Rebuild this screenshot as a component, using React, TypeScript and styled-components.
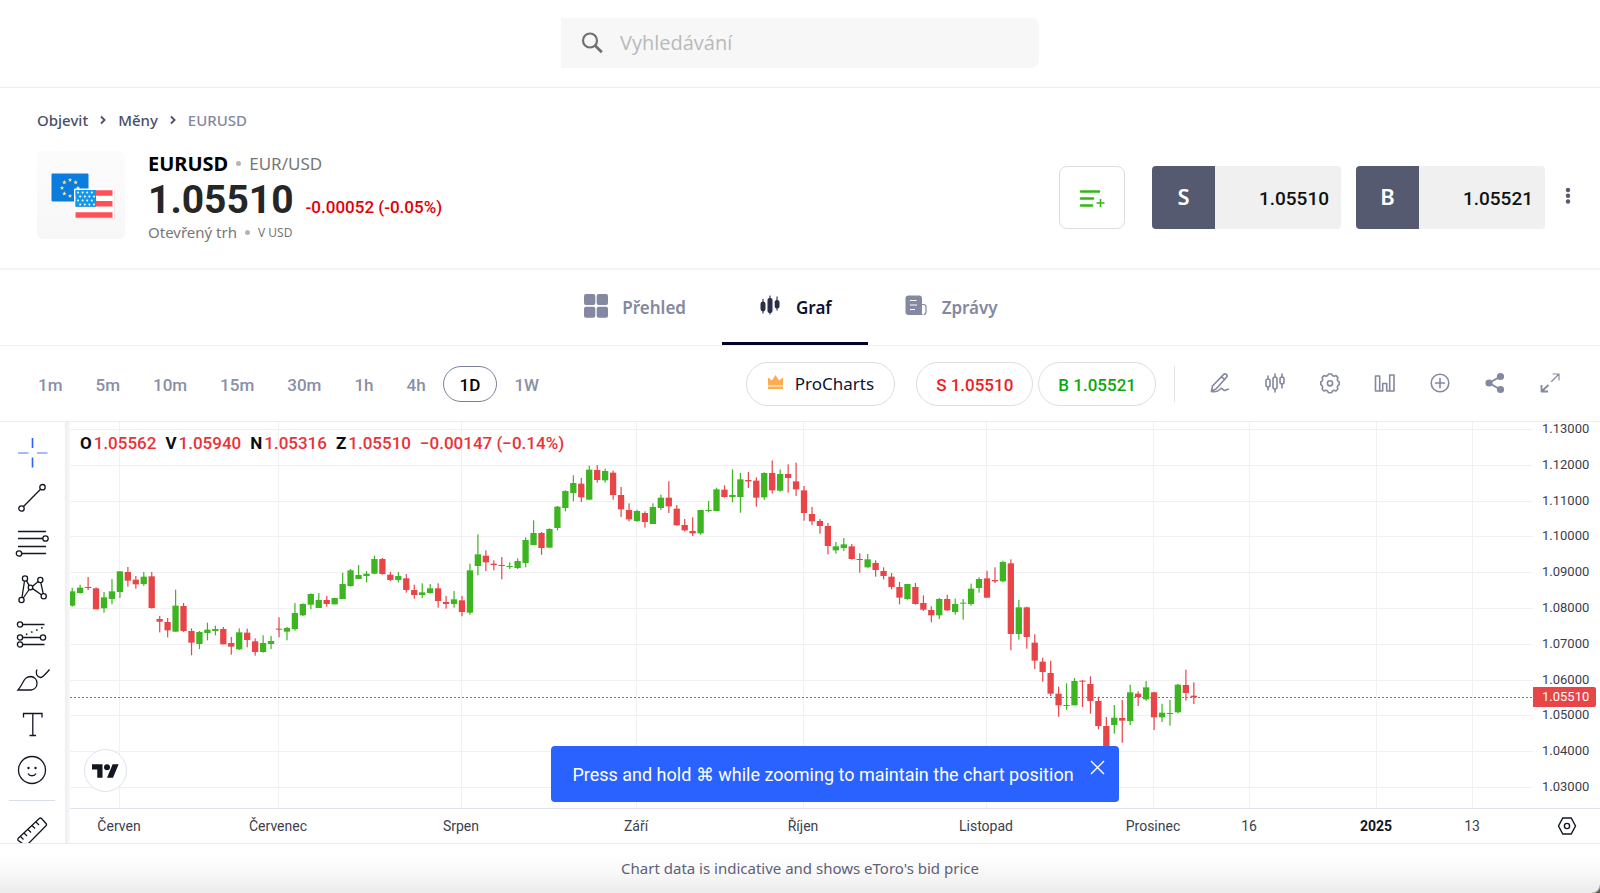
import React from 'react';
import styled, { createGlobalStyle } from 'styled-components';

const textFont = '"Noto Sans", "Open Sans", sans-serif';
const numberFont = 'Roboto, "Liberation Sans", sans-serif';
const ink = '#131722';
const muted = '#8488a0';
const slate = '#555a70';
const red = '#e84549';
const green = '#3cb521';

const GlobalStyle = createGlobalStyle`
  * { box-sizing: border-box; }
  body { margin: 0; background: #fff; font-family: ${textFont}; }
  button { font: inherit; color: inherit; background: none; border: 0; padding: 0; cursor: pointer; }
  svg { display: block; flex: none; }
`;

const Page = styled.div`
  min-height: 100vh;
  display: flex;
  flex-direction: column;
`;

const TopBar = styled.header`
  display: flex;
  justify-content: center;
  padding: 18px 24px 19px;
  border-bottom: 1px solid #ececec;
`;

const SearchBox = styled.label`
  display: flex;
  align-items: center;
  gap: 15px;
  flex: 0 1 478px;
  height: 50px;
  padding: 0 20px;
  background: #f7f7f7;
  border-radius: 0 8px 8px 0;
`;

const SearchInput = styled.input`
  flex: 1;
  min-width: 0;
  border: 0;
  outline: 0;
  background: transparent;
  font: 400 20px/28px "Open Sans", sans-serif;
  color: #333;
  &::placeholder { color: #b9b9b9; opacity: 1; }
`;

const Instrument = styled.section`
  padding: 22px 24px 27px 37px;
  border-bottom: 2px solid #f5f5f6;
`;

const Breadcrumb = styled.nav`
  display: flex;
  align-items: center;
  gap: 12px;
  margin-bottom: 21px;
  font-size: 15px;
  line-height: 20px;
  font-weight: 500;
`;

const Crumb = styled.a<{ $current?: boolean }>`
  color: ${p => (p.$current ? muted : '#4b5069')};
  text-decoration: none;
`;

const InstrumentRow = styled.div`
  display: flex;
  align-items: flex-start;
`;

const LogoTile = styled.div`
  width: 88px;
  height: 88px;
  border-radius: 6px;
  background: linear-gradient(#fcfcfc, #f7f7f7);
`;

const Quote = styled.div`
  flex: 1;
  margin-left: 23px;
`;

const QuoteLine = styled.div<{ $height: number; $baseline?: boolean }>`
  display: flex;
  align-items: ${p => (p.$baseline ? 'baseline' : 'center')};
  gap: ${p => (p.$baseline ? 12 : 8)}px;
  height: ${p => p.$height}px;
  line-height: ${p => p.$height}px;
`;

const Symbol = styled.h1`
  margin: 0;
  font-size: 20px;
  font-weight: 700;
  color: #000;
`;

const Subtle = styled.span<{ $size: number }>`
  font-size: ${p => p.$size}px;
  color: #777;
`;

const Dot = styled.span`
  width: 5px;
  height: 5px;
  border-radius: 50%;
  background: #b5b5b8;
`;

const Price = styled.span`
  font: 700 39px/48px ${numberFont};
  color: #262626;
`;

const Change = styled.span`
  font: 500 17px/24px ${numberFont};
  color: #e20008;
`;

const Actions = styled.div`
  display: flex;
  align-items: center;
  padding-top: 15px;
`;

const WatchButton = styled.button`
  display: flex;
  align-items: center;
  justify-content: center;
  width: 66px;
  height: 63px;
  margin-right: 27px;
  border: 1px solid #dedede;
  border-radius: 8px;
`;

const TradeButton = styled.button`
  display: flex;
  width: 189px;
  height: 63px;
  margin-right: 15px;
  border-radius: 4px;
  overflow: hidden;
  background: #f0f0f0;
`;

const TradeSide = styled.span`
  width: 63px;
  height: 63px;
  background: ${slate};
  color: #fff;
  font: 600 22px/60px ${textFont};
`;

const TradePrice = styled.span`
  flex: 1;
  padding-right: 12px;
  text-align: right;
  color: #111;
  font: 500 19px/66px ${numberFont};
`;

const MoreButton = styled.button`
  width: 16px;
  height: 40px;
  padding-bottom: 2px;
  display: flex;
  justify-content: center;
  align-items: center;
`;

const Tabs = styled.nav`
  display: flex;
  justify-content: center;
  height: 76px;
  padding-right: 18px;
  border-bottom: 1px solid #f0f0f2;
`;

const Tab = styled.a<{ $active?: boolean }>`
  display: flex;
  align-items: center;
  gap: 14px;
  padding: 3px 36px 0;
  border-bottom: 3px solid ${p => (p.$active ? '#000529' : 'transparent')};
  color: ${p => (p.$active ? '#0d1132' : muted)};
  text-decoration: none;
  font-size: 17px;
  line-height: 24px;
  font-weight: 600;
`;

const TabIcon = styled.span`
  width: 24px;
  padding-bottom: 4px;
`;

const Toolbar = styled.div`
  display: flex;
  align-items: center;
  height: 76px;
  padding: 0 38px 0 22px;
  border-bottom: 1px solid #ececee;
`;

const Intervals = styled.div`
  display: flex;
  align-items: center;
  gap: 1px;
  flex: 1;
`;

const IntervalButton = styled.button<{ $active?: boolean }>`
  height: 36px;
  padding: 2px 16px 0;
  border: ${p => (p.$active ? '1px solid #7b7f98' : '0')};
  border-radius: 18px;
  color: ${p => (p.$active ? '#000' : '#8a8fa6')};
  font: 500 17px/20px ${numberFont};
`;

const Pill = styled.button<{ $tone?: string; $gap: number }>`
  display: flex;
  align-items: center;
  gap: 11px;
  height: 44px;
  padding: ${p => (p.$tone ? '2px 19px 0' : '0 20px')};
  margin-right: ${p => p.$gap}px;
  border: 1px solid #dedee0;
  border-radius: 22px;
  color: ${p => p.$tone || '#0d1132'};
  font: ${p => (p.$tone ? `500 17px/24px ${numberFont}` : `400 17px/24px ${textFont}`)};
`;

const Crown = styled.svg`
  margin-bottom: 3px;
`;

const ToolIcons = styled.div`
  display: flex;
  align-items: center;
  gap: 31px;
  height: 36px;
  padding: 0 0 2px 33px;
  border-left: 1px solid #e4e4e8;
  color: ${muted};
`;

const IconButton = styled.button`
  width: 24px;
  height: 24px;
`;

const Workspace = styled.main`
  display: flex;
  height: 421px;
  overflow: hidden;
`;

const DrawBar = styled.aside`
  flex: none;
  width: 70px;
  padding: 8px 7px 0 0;
  display: flex;
  flex-direction: column;
  align-items: center;
  color: ${ink};
  background: linear-gradient(90deg, #fff 65px, #eeeef0 65px, #f9f9fa 70px);
`;

const DrawTools = styled.div`
  flex: none;
  display: flex;
  flex-direction: column;
  height: 363px;
`;

const DrawButton = styled.button`
  flex: 1;
  display: flex;
  align-items: center;
`;

const DrawDivider = styled.hr`
  flex: none;
  width: 46px;
  height: 1px;
  margin: 7px 0 14px;
  border: 0;
  background: #d9dfe8;
`;

const ChartArea = styled.section`
  position: relative;
  flex: 1;
  min-width: 0;
  display: flex;
`;

const Plot = styled.svg`
  flex: 1;
  min-width: 0;
  height: 421px;
`;

const AxisText = styled.text<{ $bold?: boolean }>`
  font: ${p => (p.$bold ? 700 : 400)} 14px ${numberFont};
  fill: ${p => (p.$bold ? '#131722' : '#3c404c')};
  text-anchor: middle;
`;

const Legend = styled.div`
  position: absolute;
  top: 11px;
  left: 10px;
  display: flex;
  gap: 9px;
  color: #ea3238;
  font: 500 17px/20px ${numberFont};
`;

const LegendKey = styled.span`
  margin-right: 2px;
  font-weight: 700;
  color: #0c0c14;
`;

const Badge = styled.a`
  position: absolute;
  left: 14px;
  bottom: 51px;
  width: 43px;
  height: 43px;
  display: flex;
  align-items: center;
  justify-content: center;
  background: #fff;
  border: 1px solid #dfe1ec;
  border-radius: 50%;
`;

const PriceAxis = styled.div`
  position: relative;
  flex: none;
  width: 67px;
  display: flex;
  flex-direction: column;
`;

const PriceLabels = styled.div`
  flex: none;
  display: flex;
  flex-direction: column;
  justify-content: space-between;
  height: 372px;
  padding-left: 9px;
  color: #3c404c;
  font: 400 13px/14px ${numberFont};
`;

const LastPrice = styled.div`
  position: absolute;
  top: 265px;
  left: 0;
  width: 63px;
  padding-left: 9px;
  border-radius: 0 2px 2px 0;
  background: ${red};
  color: #fff;
  font: 400 13px/20px ${numberFont};
`;

const AxisCorner = styled.div`
  flex: 1;
  margin-top: 14px;
  display: flex;
  align-items: center;
  justify-content: center;
  border-top: 1px solid #e0e3eb;
`;

const ToastLayer = styled.div`
  position: absolute;
  left: 0;
  right: 0;
  bottom: 41px;
  display: flex;
  justify-content: center;
  pointer-events: none;
`;

const Toast = styled.div`
  display: flex;
  gap: 16px;
  height: 56px;
  padding: 0 14px 0 21px;
  border-radius: 4px;
  background: #2962ff;
  color: #fff;
  font: 400 18px/58px ${numberFont};
  pointer-events: auto;
`;

const ToastClose = styled.button`
  height: 42px;
  display: flex;
  align-items: center;
`;

const Footer = styled.footer`
  position: relative;
  flex: 1;
  min-height: 50px;
  border-top: 1px solid #ececee;
  background: linear-gradient(#fff 20%, #f8f8f8 60%, #ebebeb);
  text-align: center;
  color: #5c6178;
  font-size: 15px;
  line-height: 48px;
`;

const WindowCorner = styled.span`
  position: absolute;
  right: 0;
  bottom: 0;
  width: 8px;
  height: 8px;
  background: radial-gradient(circle at 0 0, transparent 7px, #5c6048 9px);
`;

type Candle = [up: 0 | 1, high: number, top: number, bottom: number, low: number];

// Pixel offsets from the top of the plot, in thirds, grouped by the offset they start from.
const groups: { base: number; rows: Candle[] }[] = [
  {
    base: 108,
    rows: [
      [1,173,184,227,230],[1,164,173,189,191],[0,141,171,173,180],[0,172,175,238,238],[1,186,202,235,248],
      [1,147,184,207,223],[1,124,124,186,204],[0,111,126,152,170],[0,138,149,163,176],[1,126,140,162,168],
      [0,126,139,234,236],[0,258,267,275,307],[0,264,276,301,322],[1,179,227,305,305],[0,219,228,303,306],
      [0,295,303,338,376],[1,303,306,342,357],[1,278,299,309,331],[1,287,297,303,316],[0,291,297,343,343],
      [0,321,339,350,374],[1,295,307,358,360],[0,296,308,330,352],[0,325,334,366,377],[1,316,339,366,368],
      [1,318,333,342,357],[0,262,296,299,322],[1,291,294,305,331],[1,219,249,297,302],[1,220,222,256,258],
      [1,190,192,224,238],[1,189,210,234,234],[0,198,210,222,230],[1,203,204,223,223],[1,128,162,207,207],
      [1,117,121,168,170],[1,105,135,147,147],[1,123,131,138,157],[1,77,87,131,133],[0,84,87,132,134],
      [0,126,134,150,153],[1,126,138,150,157],[0,132,145,180,188],[0,164,180,195,206],[1,160,187,195,204],
      [1,162,175,189,191],[0,160,175,213,233],[0,198,216,222,236],[1,183,208,222,233],[0,198,211,246,259],
      [1,101,121,248,254],[1,13,73,108,136],[0,61,77,97,123],[0,91,101,105,121],
    ],
  },
  {
    base: 28,
    rows: [
      [0,321,345,348,388],[1,337,348,351,357],[1,325,333,354,357],[1,262,270,339,352],[1,211,249,285,285],
      [0,246,249,294,314],[1,235,237,293,293],[1,168,170,234,241],[1,121,123,174,184],[1,76,99,129,154],
      [0,84,101,142,156],[1,47,59,149,149],[0,45,60,90,98],[1,56,63,91,98],[0,62,68,135,149],
      [0,111,135,178,201],[0,160,180,208,214],[1,179,183,213,216],[0,184,189,216,233],[1,160,171,222,222],
      [1,134,143,174,180],[0,94,143,169,189],[0,165,176,226,227],[0,207,225,241,245],[0,202,243,250,258],
      [1,180,180,250,254],[1,153,180,183,187],[1,113,118,183,183],[0,106,119,141,143],[1,58,135,141,157],
      [1,69,88,141,188],[0,66,90,94,114],[0,82,92,143,170],[1,67,69,142,149],[0,31,69,121,131],
      [1,58,72,122,125],[0,43,72,84,128],[0,38,94,118,138],[0,108,121,189,212],[0,171,192,214,225],
      [0,207,213,228,251],[0,219,228,288,313],[1,276,289,301,311],[1,264,283,294,303],[0,282,289,327,329],
      [0,310,327,329,368],[1,312,328,352,353],[0,331,339,360,380],[0,352,363,378,388],[0,369,380,411,418],
      [0,396,411,443,463],[1,402,402,447,449],[0,399,411,462,464],[0,436,459,479,483],[0,469,480,496,517],
      [1,444,447,496,507],[0,434,447,481,483],[1,446,462,486,494],[1,447,458,461,509],[1,401,416,462,467],
      [1,382,387,414,428],[0,362,385,443,443],[0,352,390,394,399],[1,332,336,394,397],
    ],
  },
  {
    base: 118,
    rows: [
      [0,58,70,282,331],[1,180,202,282,299],[0,200,202,291,326],[0,283,308,362,387],[0,353,365,396,425],
      [0,362,399,461,468],[0,440,461,496,530],[1,430,495,498,509],[1,414,423,496,496],[0,420,422,425,501],
      [0,409,432,483,521],[0,470,483,558,568],[0,531,558,625,625],[1,495,533,555,581],[0,480,534,542,608],
      [1,434,457,543,555],[0,454,461,471,498],[1,423,442,478,482],[0,455,457,532,570],[1,491,518,532,546],
      [1,480,519,522,557],[1,432,434,517,520],[0,389,435,459,482],[0,427,467,472,492],
    ],
  },
];

const candles = groups.flatMap(g =>
  g.rows.map(([up, ...ys]) => ({ up, ys: ys.map(y => g.base + y / 3) })),
);

const priceTicks = ['1.13000', '1.12000', '1.11000', '1.10000', '1.09000', '1.08000', '1.07000', '1.06000', '1.05000', '1.04000', '1.03000'];

const timeTicks: [number, string, boolean?][] = [
  [49, 'Červen'], [208, 'Červenec'], [391, 'Srpen'], [566, 'Září'], [733, 'Říjen'], [916, 'Listopad'],
  [1083, 'Prosinec'], [1179, '16'], [1306, '2025', true], [1402, '13'],
];

const intervals = ['1m', '5m', '10m', '15m', '30m', '1h', '4h', '1D', '1W'];

const legend = [['O', '1.05562'], ['V', '1.05940'], ['N', '1.05316'], ['Z', '1.05510']];

const star = (x: number, y: number, r: number) =>
  Array.from({ length: 10 }, (_, i) => {
    const a = (Math.PI * i) / 5 - Math.PI / 2;
    const d = i % 2 ? r * 0.45 : r;
    return `${(x + d * Math.cos(a)).toFixed(2)},${(y + d * Math.sin(a)).toFixed(2)}`;
  }).join(' ');

const Flags = () => (
  <svg width="88" height="88" viewBox="0 0 88 88" aria-hidden="true">
    <rect x="14.5" y="22.500" width="37" height="28" rx="1" fill="#0b7bdc" />
    {Array.from({ length: 8 }, (_, i) => (
      <polygon
        key={i}
        fill="#fbe38e"
        points={star(33 + 8 * Math.sin((i * Math.PI) / 4), 37 - 8 * Math.cos((i * Math.PI) / 4), 2.3)}
      />
    ))}
    <rect x="37.500" y="38.500" width="40.500" height="30" rx="1.5" fill="#000" opacity=".07" />
    <rect x="37" y="37.500" width="40" height="30" rx="1" fill="#fff" />
    <path d="M38.500 42h37M38.500 52.800h37M38.500 64h37" stroke="#ff5058" strokeWidth="5.500" />
    <rect x="38.500" y="39" width="20.500" height="16.800" fill="#1199ee" />
    {[41, 45, 49, 53].map((y, r) =>
      [0, 1, 2, 3].map(c => (
        <circle key={`${r}${c}`} cx={41 + c * 4.6 + (r % 2) * 2.2} cy={y + 0.5} r="1" fill="#fff" />
      )),
    )}
  </svg>
);

const line = { fill: 'none', stroke: 'currentColor', strokeWidth: 1.6, strokeLinecap: 'round', strokeLinejoin: 'round' } as const;

const toolIcons: [string, React.ReactNode][] = [
  ['Draw', <g {...line} key="d"><path d="M3.500 20l1-5L15.500 3.600a2 2 0 0 1 3 2.700L8 18z" /><path d="M13.500 5.800l3 2.600M3.500 20.500c4 .8 7-.5 9-2.500s2.600 1.800 4 1.500 1.500-1.300 4-1.300" /></g>],
  ['Chart type', <g {...line} key="c"><path d="M5 5v3M5 16v3M12 3v3M12 18v3M19 3v3M19 13v4" /><rect x="3" y="8" width="4" height="8" rx="2" /><rect x="10" y="6" width="4" height="12" rx="2" /><rect x="17" y="6" width="4" height="7" rx="2" /></g>],
  ['Settings', <g {...line} key="s"><path d="M9.600 4.600L10.400 3h3.200l.8 1.600 1.700.7 1.900-.7 1.900 2-.6 1.900.7 1.700 1.200.8v2.600l-1.200.8-.7 1.700.6 1.900-1.900 2-1.900-.7-1.700.7-.8 1.700h-3.200l-.8-1.700-1.700-.7-1.900.7-1.900-2 .6-1.900-.7-1.700-1.200-.8V11l1.200-.8.7-1.700-.6-1.900 1.900-2 1.900.7z" /><circle cx="12" cy="12.300" r="2.600" /></g>],
  ['Indicators', <path key="i" {...line} d="M2.500 20V5h4.200v15M6.700 20h3v-7.500h4V20h3V4H21v16M2.500 20h4.200M16.700 20H21" />],
  ['Compare', <g {...line} key="p"><circle cx="12" cy="12" r="8.800" /><path d="M12 7.500v9M7.500 12h9" /></g>],
  ['Share', <g key="h" fill="currentColor"><circle cx="17.500" cy="5.500" r="3.600" /><circle cx="6" cy="12" r="3.600" /><circle cx="17.500" cy="18.500" r="3.600" /><path d="M17.500 5.500L6 12l11.500 6.500" fill="none" stroke="currentColor" strokeWidth="2" /></g>],
  ['Full screen', <g {...line} key="f"><path d="M13.500 10.500L21 3M15 3H21v6" strokeWidth="1.100" /><path d="M10.500 14L3.500 20.500M3.500 14v6.500h6.500" strokeWidth="1.800" strokeLinecap="butt" /></g>],
];

const thin = { fill: 'none', stroke: 'currentColor', strokeWidth: 1.3 } as const;

const drawTools: [string, React.ReactNode][] = [
  ['Crosshair', <g key="x" fill="none"><path d="M18.500 3v10M18.500 22.500v10" stroke="#2962ff" strokeWidth="1.600" /><path d="M4 18h10.500M23 18h10.500" stroke="#8aa2fb" strokeWidth="1.600" /></g>],
  ['Trend line', <g key="l" {...thin}><circle cx="28.500" cy="7.200" r="2.700" /><circle cx="7.500" cy="28.500" r="2.700" /><path d="M9.500 26.500L26.500 9.200" /></g>],
  ['Fibonacci', <g key="f" {...thin}><path d="M4 6.500h28M4 13.500h25M4 21.500h28M8 28.500h24" /><circle cx="31.500" cy="13.500" r="2.700" /><circle cx="5" cy="28.500" r="2.700" /></g>],
  ['Patterns', <g key="p" {...thin}><circle cx="11" cy="7.500" r="2.600" /><circle cx="26.300" cy="9" r="2.600" /><circle cx="7.500" cy="29" r="2.600" /><circle cx="29.700" cy="25.200" r="2.600" /><circle cx="16.500" cy="16.500" r="2.300" /><path d="M10.500 10L8 26.400M12.500 9.600l2.600 5M18.500 15.300l5.800-4.800M26.800 11.600l2.400 11M18.600 17.600l8.800 6.200M15.200 18.500L9.200 27" /></g>],
  ['Projection', <g key="r" {...thin}><circle cx="6" cy="8.500" r="2.600" /><circle cx="6" cy="21.500" r="2.600" /><circle cx="29" cy="21.500" r="2.600" /><circle cx="6" cy="28.500" r="2.600" /><path d="M8.600 8.500H30.500M8.600 21.500h17.800M8.600 28.500H30.500" /><path d="M12 18.500L30 11" strokeDasharray="1.500 4" strokeWidth="1.600" /></g>],
  ['Brush', <g key="b" {...thin}><path d="M4 28h13c8-1 8-12.500 0-13.500-8 0-7 7-13 13.500z" /><path d="M23 7.500c-2 4 0 7.500 3.500 8 1.500.2 3-.8 9-8" /></g>],
  ['Text', <path key="t" {...thin} d="M9.500 10.500v-4H28v4M18.800 6.500v22M15.500 28.500h6.500" />],
  ['Emoji', <g key="e" {...thin}><circle cx="18" cy="18" r="13.500" /><path d="M14 21.500c1.500 3 6.500 3 8 0" /><circle cx="14.500" cy="16" r="1.200" fill="currentColor" stroke="none" /><circle cx="21.500" cy="16" r="1.200" fill="currentColor" stroke="none" /></g>],
];

const Chevron = () => (
  <svg width="6" height="10" viewBox="0 0 6 10" aria-hidden="true">
    <path d="M1 1.500l3.600 3.500-3.600 3.500" fill="none" stroke="#4b5069" strokeWidth="1.800" />
  </svg>
);

export default function App() {
  return (
    <Page>
      <GlobalStyle />
      <TopBar>
        <SearchBox>
          <svg width="22" height="22" viewBox="0 0 22 22" aria-hidden="true">
            <circle cx="9" cy="8.500" r="7" fill="none" stroke="#707070" strokeWidth="2.200" />
            <path d="M13.800 13.200L20.800 20.200" stroke="#707070" strokeWidth="2.800" />
          </svg>
          <SearchInput type="search" aria-label="Vyhledávání" placeholder="Vyhledávání" />
        </SearchBox>
      </TopBar>

      <Instrument>
        <Breadcrumb aria-label="Breadcrumb">
          <Crumb href="#objevit">Objevit</Crumb>
          <Chevron />
          <Crumb href="#meny">Měny</Crumb>
          <Chevron />
          <Crumb href="#eurusd" $current>EURUSD</Crumb>
        </Breadcrumb>
        <InstrumentRow>
          <LogoTile><Flags /></LogoTile>
          <Quote>
            <QuoteLine $height={25}>
              <Symbol>EURUSD</Symbol>
              <Dot />
              <Subtle $size={17}>EUR/USD</Subtle>
            </QuoteLine>
            <QuoteLine $height={48} $baseline>
              <Price>1.05510</Price>
              <Change>-0.00052 (-0.05%)</Change>
            </QuoteLine>
            <QuoteLine $height={17}>
              <Subtle $size={15}>Otevřený trh</Subtle>
              <Dot />
              <Subtle $size={12}>V USD</Subtle>
            </QuoteLine>
          </Quote>
          <Actions>
            <WatchButton aria-label="Add to watchlist">
              <svg width="26" height="18" viewBox="0 0 26 18" aria-hidden="true" fill="none" stroke="#32b814" strokeLinecap="round">
                <path d="M2 2.500h18M2 9.500h12M2 16.500h11" strokeWidth="2.600" />
                <path d="M21.500 10v8M17.500 14h8" strokeWidth="1.600" strokeLinecap="butt" />
              </svg>
            </WatchButton>
            <TradeButton>
              <TradeSide>S</TradeSide>
              <TradePrice>1.05510</TradePrice>
            </TradeButton>
            <TradeButton>
              <TradeSide>B</TradeSide>
              <TradePrice>1.05521</TradePrice>
            </TradeButton>
            <MoreButton aria-label="More">
              <svg width="6" height="20" viewBox="0 0 6 20" fill={slate} aria-hidden="true">
                <circle cx="3" cy="3" r="2.200" /><circle cx="3" cy="8.700" r="2.200" /><circle cx="3" cy="14.500" r="2.200" />
              </svg>
            </MoreButton>
          </Actions>
        </InstrumentRow>
      </Instrument>

      <Tabs>
        <Tab href="#prehled">
          <TabIcon>
            <svg width="24" height="24" viewBox="0 0 24 24" fill={muted} aria-hidden="true">
              <rect width="11.300" height="11" rx="2" /><rect x="12.700" width="11.300" height="11" rx="2" />
              <rect y="12.700" width="11.300" height="11" rx="2" /><rect x="12.700" y="12.700" width="11.300" height="11" rx="2" />
            </svg>
          </TabIcon>
          Přehled
        </Tab>
        <Tab href="#graf" $active>
          <TabIcon>
            <svg width="24" height="24" viewBox="0 0 24 24" fill="#2b2f49" aria-hidden="true">
              <rect x="2.500" y="7.500" width="5" height="10" rx="2.400" /><rect x="9.500" y="4" width="5" height="15" rx="2" /><rect x="16.700" y="6" width="4.800" height="8.500" rx="2.200" />
              <path d="M5 5v14.500M12 1.500v19M19 2.500v14" stroke="#2b2f49" strokeWidth="1.100" />
            </svg>
          </TabIcon>
          Graf
        </Tab>
        <Tab href="#zpravy">
          <TabIcon>
            <svg width="24" height="24" viewBox="0 0 24 24" aria-hidden="true">
              <path d="M16.500 10.500h3c1.600 0 2.500 1 2.500 2.500v5c0 1.600-.8 2.500-2.500 2.500" fill="none" stroke={muted} strokeWidth="1.200" />
              <path d="M4.500 1.500h10.500a3 3 0 0 1 3 3v14.500c0 1 .4 2 1.300 2H4.500a3 3 0 0 1-3-3V4.500a3 3 0 0 1 3-3z" fill={muted} />
              <path d="M6 6.500h6.500M6 11h7M6 15.500h5" stroke="#fff" strokeWidth="1.100" />
            </svg>
          </TabIcon>
          Zprávy
        </Tab>
      </Tabs>

      <Toolbar>
        <Intervals>
          {intervals.map(t => <IntervalButton key={t} $active={t === '1D'}>{t}</IntervalButton>)}
        </Intervals>
        <Pill $gap={21}>
          <Crown width="17" height="15" viewBox="0 0 17 15" fill="#ffab4f" aria-hidden="true">
            <path d="M1 2.500l4 3L8.500 0 12 5.500l4-3V10.500H1zM1 11.600h15v2.400H1z" />
          </Crown>
          ProCharts
        </Pill>
        <Pill $gap={5} $tone="#ee1c25">S 1.05510</Pill>
        <Pill $gap={18} $tone="#0ca80c">B 1.05521</Pill>
        <ToolIcons>
          {toolIcons.map(([name, art]) => (
            <IconButton key={name} aria-label={name}>
              <svg width="24" height="24" viewBox="0 0 24 24" aria-hidden="true">{art}</svg>
            </IconButton>
          ))}
        </ToolIcons>
      </Toolbar>

      <Workspace>
        <DrawBar>
          <DrawTools>
            {drawTools.map(([name, art]) => (
              <DrawButton key={name} aria-label={name}>
                <svg width="36" height="36" viewBox="0 0 36 36" aria-hidden="true">{art}</svg>
              </DrawButton>
            ))}
          </DrawTools>
          <DrawDivider />
          <button aria-label="Measure">
            <svg width="36" height="36" viewBox="0 0 36 36" aria-hidden="true">
              <g {...thin}>
                <path d="M27.500 3.500l4.500 5c.7.8.7 1.500 0 2.200L13 30c-.8.8-1.600.8-2.400 0L4.300 25.500c-.6-.7-.6-1.500 0-2.200L25.300 3.500c.8-.7 1.500-.7 2.200 0z" />
                <path d="M22 7l3 3M18 10.500l3 3M14 14.500l3 3M10 18l3 3M6.500 21.500l3 3" />
              </g>
            </svg>
          </button>
        </DrawBar>

        <ChartArea>
          <Plot role="img" aria-label="EURUSD">
            {priceTicks.map((t, i) => (
              <line key={t} x1="0" x2="100%" y1={Math.round(7 + i * 35.8) + 0.5} y2={Math.round(7 + i * 35.8) + 0.5} stroke="#f1f1f3" />
            ))}
            {timeTicks.map(([x, label]) => (
              <line key={label} x1={x + 0.5} x2={x + 0.5} y1="0" y2="386" stroke="#f1f1f3" />
            ))}
            <line x1="0" x2="100%" y1="275.500" y2="275.500" stroke="#f0494e" strokeDasharray="2 2" shapeRendering="crispEdges" />
            {candles.map(({ up, ys: [high, top, bottom, low] }, i) => {
              const x = 2.1 + i * 7.955;
              return (
                <g key={i} fill={up ? green : red}>
                  <rect x={x - 0.5} y={high} width="1.200" height={low - high} />
                  <rect x={x - 3.1} y={top} width="6.300" height={Math.max(bottom - top, 1)} />
                </g>
              );
            })}
            <line x1="0" x2="100%" y1="386.500" y2="386.500" stroke="#e0e3eb" />
            {timeTicks.map(([x, label, bold]) => (
              <AxisText key={label} x={x} y="409" $bold={bold}>{label}</AxisText>
            ))}
          </Plot>

          <PriceAxis>
            <PriceLabels>{priceTicks.map(t => <span key={t}>{t}</span>)}</PriceLabels>
            <LastPrice>1.05510</LastPrice>
            <AxisCorner>
              <button aria-label="Axis settings">
                <svg width="20" height="18" viewBox="0 0 20 18" fill="none" stroke={ink} strokeWidth="1.400" aria-hidden="true">
                  <path d="M5.800 1h8.400L18.500 9l-4.300 8H5.800L1.500 9z" /><circle cx="10" cy="9" r="2.600" />
                </svg>
              </button>
            </AxisCorner>
          </PriceAxis>

          <Legend>
            {legend.map(([k, v]) => <span key={k}><LegendKey>{k}</LegendKey>{v}</span>)}
            <span>−0.00147 (−0.14%)</span>
          </Legend>
          <Badge href="#tradingview" aria-label="TradingView">
            <svg width="27" height="14" viewBox="0 4 36 18" fill={ink} aria-hidden="true">
              <path d="M14 22H7V11H0V4h14v18zM28 22h-8l7.500-18h8L28 22z" /><circle cx="20" cy="8" r="4" />
            </svg>
          </Badge>
          <ToastLayer>
            <Toast role="status">
              Press and hold ⌘ while zooming to maintain the chart position
              <ToastClose aria-label="Close">
                <svg width="15" height="15" viewBox="0 0 15 15" aria-hidden="true">
                  <path d="M1 1l13 13M14 1L1 14" stroke="#fff" strokeWidth="1.400" />
                </svg>
              </ToastClose>
            </Toast>
          </ToastLayer>
        </ChartArea>
      </Workspace>

      <Footer>
        Chart data is indicative and shows eToro's bid price
        <WindowCorner />
      </Footer>
    </Page>
  );
}
